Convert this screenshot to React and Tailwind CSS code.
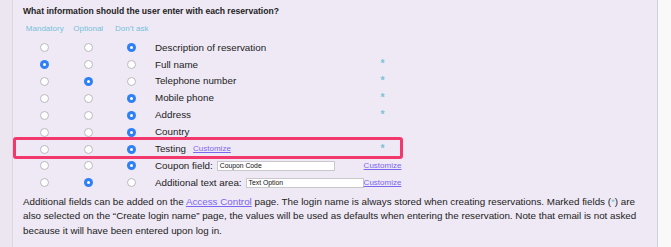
import React from "react";

const rows = [
  { label: "Description of reservation", sel: 2 },
  { label: "Full name", sel: 0, star: true },
  { label: "Telephone number", sel: 1, star: true },
  { label: "Mobile phone", sel: 2, star: true },
  { label: "Address", sel: 2, star: true },
  { label: "Country", sel: 2 },
  { label: "Testing", sel: 2, star: true, inlineCustomize: true },
  { label: "Coupon field:", sel: 2, input: "Coupon Code", customize: true },
  { label: "Additional text area:", sel: 1, input: "Text Option", customize: true },
];

function Radio({ checked }) {
  if (checked) {
    return (
      <span className="flex h-[9px] w-[9px] items-center justify-center rounded-full bg-[#2f80f7]">
        <span className="h-[3px] w-[3px] rounded-full bg-white" />
      </span>
    );
  }
  return <span className="block h-[9px] w-[9px] rounded-full border border-[#b9b9bd] bg-white" />;
}

const linkCls = "text-[#7b67ef] underline decoration-[#7b67ef] text-[8px]";

export default function App() {
  return (
    <div
      className="flex h-[247px] w-[671px] bg-[#f9f9fa] text-[#222]"
      style={{ fontFamily: '"Liberation Sans", Arial, Helvetica, sans-serif' }}
    >
      <div className="w-[13px] border-r border-[#dcd6e1] bg-[#ebe6ef]" />
      <div className="relative w-[645px] border-r border-[#d3d0d7] bg-[#efe9f5] pl-[10px] pt-[5px]">
        <div className="text-[8.6px] font-bold leading-[12px]">
          What information should the user enter with each reservation?
        </div>
        <div className="mt-[6px] grid grid-cols-[43.5px_43.5px_43.5px] text-[8px] leading-[12px] text-[#76c1d8]">
          <div className="text-center">Mandatory</div>
          <div className="text-center">Optional</div>
          <div className="text-center">Don’t ask</div>
        </div>
        <div className="mt-[4.25px]">
          {rows.map((r, i) => (
            <div
              key={i}
              className="grid h-[16.9px] grid-cols-[43.5px_43.5px_43.5px_210.5px_37px] items-center"
            >
              {[0, 1, 2].map((c) => (
                <div key={c} className="flex justify-center">
                  <Radio checked={r.sel === c} />
                </div>
              ))}
              <div className="flex items-center whitespace-nowrap pl-[1.5px] text-[9.8px] leading-[12px]">
                <span>{r.label}</span>
                {r.inlineCustomize && <span className={`${linkCls} ml-[7px]`}>Customize</span>}
                {r.input && (
                  <span className="ml-[4px] flex h-[10px] w-[118px] shrink-0 items-center border border-[#c9c9cc] bg-white pl-[2px] text-[6.8px] leading-[8px] text-[#111]">
                    {r.input}
                  </span>
                )}
              </div>
              <div className="flex justify-center">
                {r.star && (
                  <span className="-mt-[3px] text-[10.5px] font-bold leading-[10px] text-[#7cc3d8]">*</span>
                )}
                {r.customize && <span className={linkCls}>Customize</span>}
              </div>
            </div>
          ))}
        </div>
        <p className="mt-[3.3px] w-[620px] text-[9.8px] leading-[14.5px]">
          Additional fields can be added on the{" "}
          <span className="text-[#7b67ef] underline">Access Control</span> page. The login name
          is always stored when creating reservations. Marked fields (
          <span className="text-[#74c0d7]">*</span>) are also selected on the “Create login
          name” page, the values will be used as defaults when entering the reservation. Note
          that email is not asked because it will have been entered upon log in.
        </p>
        <div className="pointer-events-none absolute left-0 top-[137px] h-[22px] w-[390px] rounded-[3px] border-[3px] border-[#f2386c]" />
      </div>
    </div>
  );
}
